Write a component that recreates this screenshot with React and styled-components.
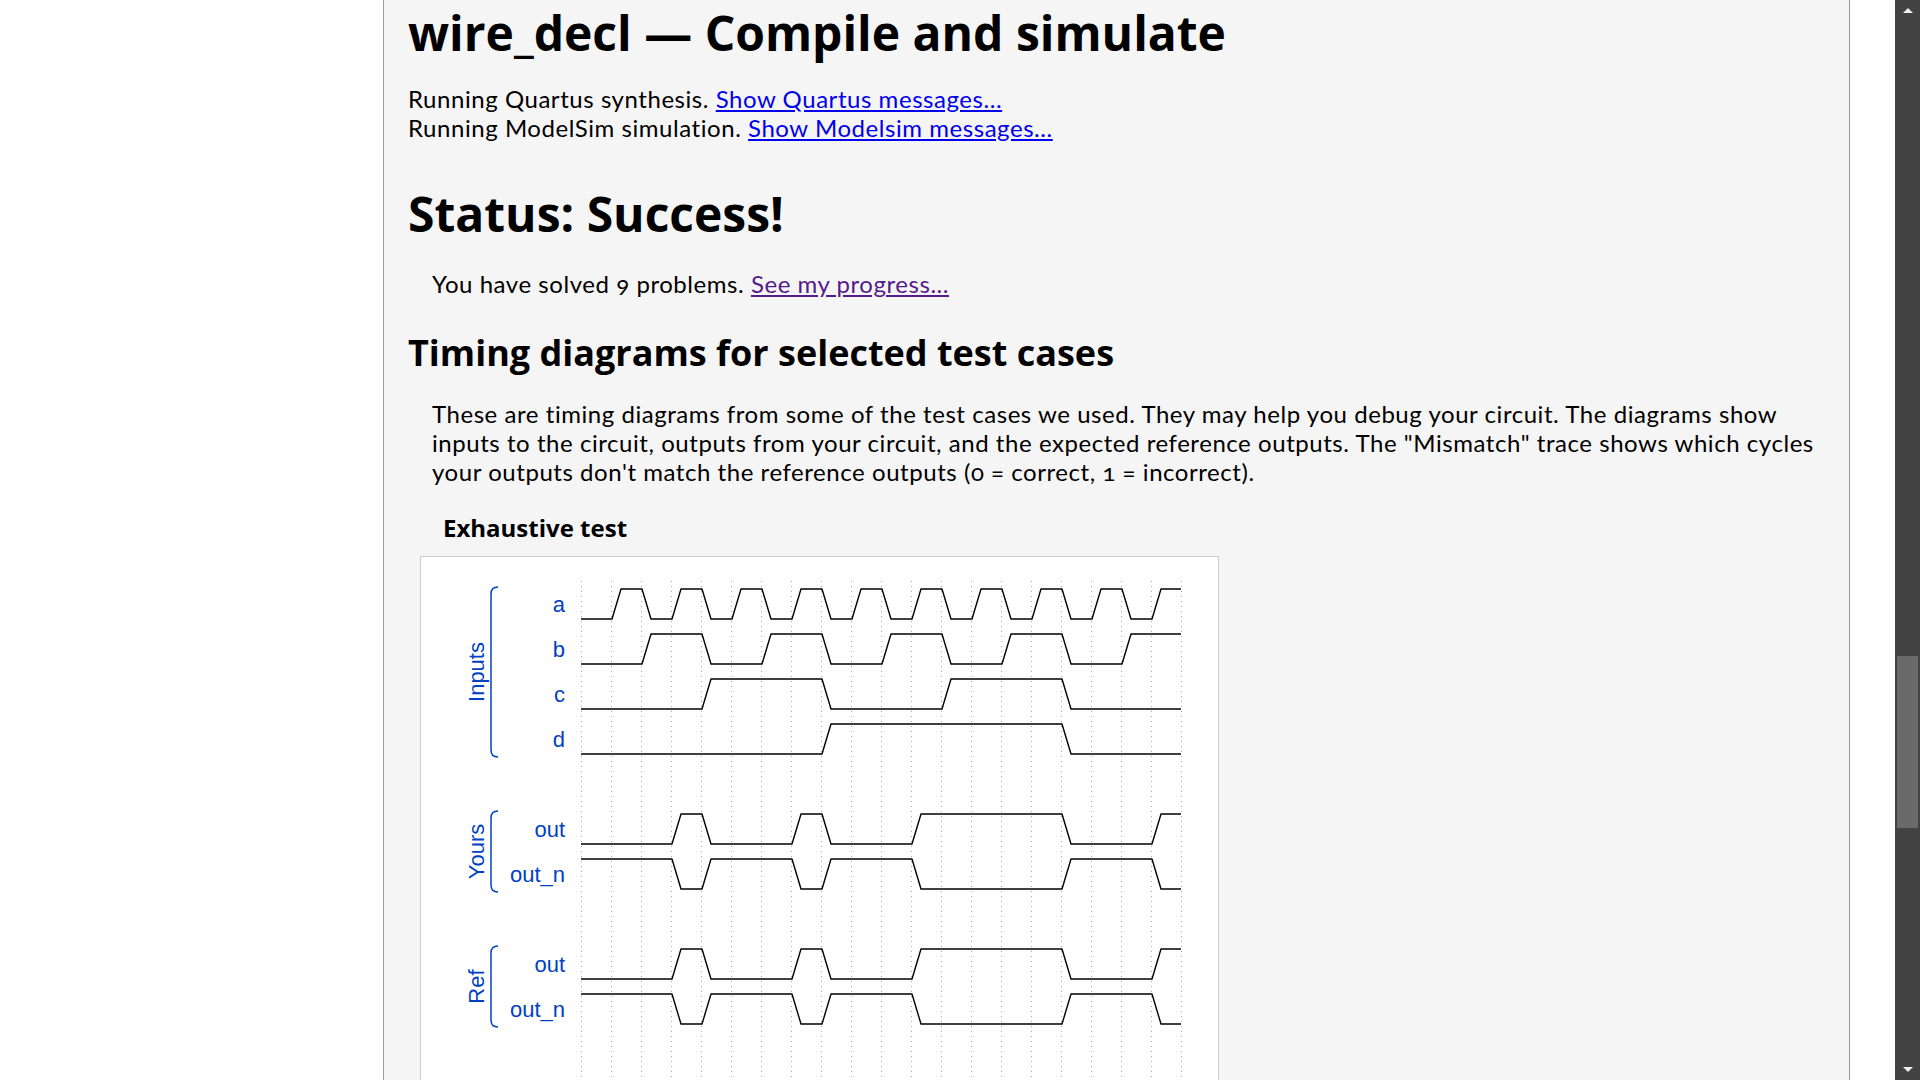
import styled, { createGlobalStyle } from "styled-components";

const GlobalStyle = createGlobalStyle`
  html, body {
    margin: 0;
    height: 100%;
    overflow: hidden;
    background: #fff;
  }
`;

const STEP = 30;
const X0 = 160;
const SLOPE = 9;
const UNITS = 20;

const counterBit = bit =>
  Array.from({ length: UNITS }, (_, i) => ((i % 16) >> bit) & 1);

const a = counterBit(0);
const b = counterBit(1);
const c = counterBit(2);
const d = counterBit(3);
const out = a.map((v, i) => (v & b[i]) | (c[i] & d[i]));
const outN = out.map(v => 1 - v);

const rowLow = row => 62 + row * 45;

const wavePath = (bits, low) => {
  const high = low - 30;
  let y = bits[0] ? high : low;
  let path = `M${X0},${y}`;

  for (let i = 1; i < bits.length; i++) {
    if (bits[i] === bits[i - 1]) continue;
    const x = X0 + i * STEP + 1;
    const next = bits[i] ? high : low;
    path += ` L${x},${y} L${x + SLOPE},${next}`;
    y = next;
  }

  return path + ` L${X0 + bits.length * STEP},${y}`;
};

const signals = [
  { name: "a", bits: a, row: 0 },
  { name: "b", bits: b, row: 1 },
  { name: "c", bits: c, row: 2 },
  { name: "d", bits: d, row: 3 },
  { name: "out", bits: out, row: 5 },
  { name: "out_n", bits: outN, row: 6 },
  { name: "out", bits: out, row: 8 },
  { name: "out_n", bits: outN, row: 9 }
];

const groups = [
  { name: "Inputs", top: 30, bottom: 200 },
  { name: "Yours", top: 254, bottom: 335 },
  { name: "Ref", top: 389, bottom: 470 }
];

const BLUE = "#0041c4";

const TimingDiagram = () => (
  <Diagram width="797" height="600">
    {Array.from({ length: UNITS + 1 }, (_, k) => (
      <line
        key={k}
        x1={X0 + k * STEP + 0.5}
        x2={X0 + k * STEP + 0.5}
        y1="24"
        y2="600"
        stroke="#a8a8a8"
        strokeWidth="1"
        strokeDasharray="1 4"
      />
    ))}

    {signals.map(s => (
      <g key={s.row}>
        <text
          x="144"
          y={rowLow(s.row) - 7}
          textAnchor="end"
          fill={BLUE}
          fontFamily="'Liberation Sans', Arial, sans-serif"
          fontSize="22"
        >
          {s.name}
        </text>
        <path
          d={wavePath(s.bits, rowLow(s.row))}
          fill="none"
          stroke="#000"
          strokeWidth="1.4"
          strokeLinejoin="round"
        />
      </g>
    ))}

    {groups.map(g => (
      <g key={g.name}>
        <text
          transform={`translate(63, ${(g.top + g.bottom) / 2}) rotate(-90)`}
          textAnchor="middle"
          fill={BLUE}
          fontFamily="'Liberation Sans', Arial, sans-serif"
          fontSize="22"
        >
          {g.name}
        </text>
        <path
          d={`M77,${g.top} Q70,${g.top} 70,${g.top + 7} L70,${g.bottom - 7} Q70,${g.bottom} 77,${g.bottom}`}
          fill="none"
          stroke={BLUE}
          strokeWidth="1.5"
        />
      </g>
    ))}
  </Diagram>
);

const App = () => (
  <>
    <GlobalStyle />
    <Page>
      <Gutter />
      <Column>
        <Title>wire_decl — Compile and simulate</Title>

        <RunLines>
          Running Quartus synthesis. <Link href="#">Show Quartus messages...</Link>
          <br />
          Running ModelSim simulation. <Link href="#">Show Modelsim messages...</Link>
        </RunLines>

        <Title $gap={39}>Status: Success!</Title>

        <Indented $gap={24}>
          You have solved 9 problems. <Link $visited href="#">See my progress...</Link>
        </Indented>

        <Subtitle>Timing diagrams for selected test cases</Subtitle>

        <Indented $gap={23}>
          These are timing diagrams from some of the test cases we used. They may help you debug your circuit. The diagrams show
          <br />
          inputs to the circuit, outputs from your circuit, and the expected reference outputs. The "Mismatch" trace shows which cycles
          <br />
          your outputs don't match the reference outputs (0 = correct, 1 = incorrect).
        </Indented>

        <TestName>Exhaustive test</TestName>

        <DiagramBox>
          <TimingDiagram />
        </DiagramBox>
      </Column>
      <RightGutter />
      <Scrollbar>
        <ArrowUp />
        <Track>
          <Thumb />
        </Track>
        <ArrowDown />
      </Scrollbar>
    </Page>
  </>
);

const Page = styled.div`
  display: flex;
  height: 100vh;
  overflow: hidden;
`;

const Gutter = styled.div`
  width: 383px;
  flex-shrink: 0;
`;

const RightGutter = styled.div`
  flex: 1;
`;

const Column = styled.main`
  width: 1417px;
  flex-shrink: 0;
  padding: 0 24px;
  border-left: 1px solid #9a9a9a;
  border-right: 1px solid #9a9a9a;
  background: #f5f5f5;
  overflow: hidden;
`;

const Title = styled.h1`
  margin: ${({ $gap }) => $gap || 0}px 0 0;
  font-family: "Open Sans", sans-serif;
  font-size: 48px;
  font-weight: 700;
  line-height: 65px;
  color: #000;
`;

const Subtitle = styled.h2`
  margin: 29px 0 0;
  font-family: "Open Sans", sans-serif;
  font-size: 36px;
  font-weight: 700;
  line-height: 49px;
  color: #000;
`;

const TestName = styled.h4`
  margin: 25px 0 0;
  padding-left: 35px;
  font-family: "Open Sans", sans-serif;
  font-size: 24px;
  font-weight: 700;
  line-height: 33px;
  color: #000;
`;

const bodyText = `
  font-family: Lato, "Open Sans", sans-serif;
  font-size: 24px;
  line-height: 28.7px;
  letter-spacing: 0.55px;
  font-variant-numeric: oldstyle-nums;
  color: #000;
`;

const RunLines = styled.p`
  margin: 20px 0 0;
  ${bodyText}
`;

const Indented = styled.p`
  margin: ${({ $gap }) => $gap}px 0 0;
  padding-left: 24px;
  white-space: nowrap;
  ${bodyText}
`;

const Link = styled.a`
  color: ${({ $visited }) => ($visited ? "#551a8b" : "#0000ee")};
  text-decoration: underline;
`;

const DiagramBox = styled.div`
  margin: 12px 0 0 12px;
  width: 797px;
  height: 600px;
  border: 1px solid #cccccc;
  background: #fff;
`;

const Diagram = styled.svg`
  display: block;
`;

const Scrollbar = styled.div`
  width: 25px;
  flex-shrink: 0;
  display: flex;
  flex-direction: column;
  align-items: center;
  background: #434343;
`;

const ArrowUp = styled.div`
  margin-top: 8px;
  width: 0;
  height: 0;
  border-left: 5px solid transparent;
  border-right: 5px solid transparent;
  border-bottom: 5px solid #f0f0f0;
`;

const ArrowDown = styled.div`
  margin-bottom: 8px;
  width: 0;
  height: 0;
  border-left: 5px solid transparent;
  border-right: 5px solid transparent;
  border-top: 5px solid #f0f0f0;
`;

const Track = styled.div`
  flex: 1;
  width: 100%;
  display: flex;
  justify-content: center;
`;

const Thumb = styled.div`
  margin-top: 643px;
  width: 21px;
  height: 172px;
  background: #6a6a6a;
`;

export default App;
